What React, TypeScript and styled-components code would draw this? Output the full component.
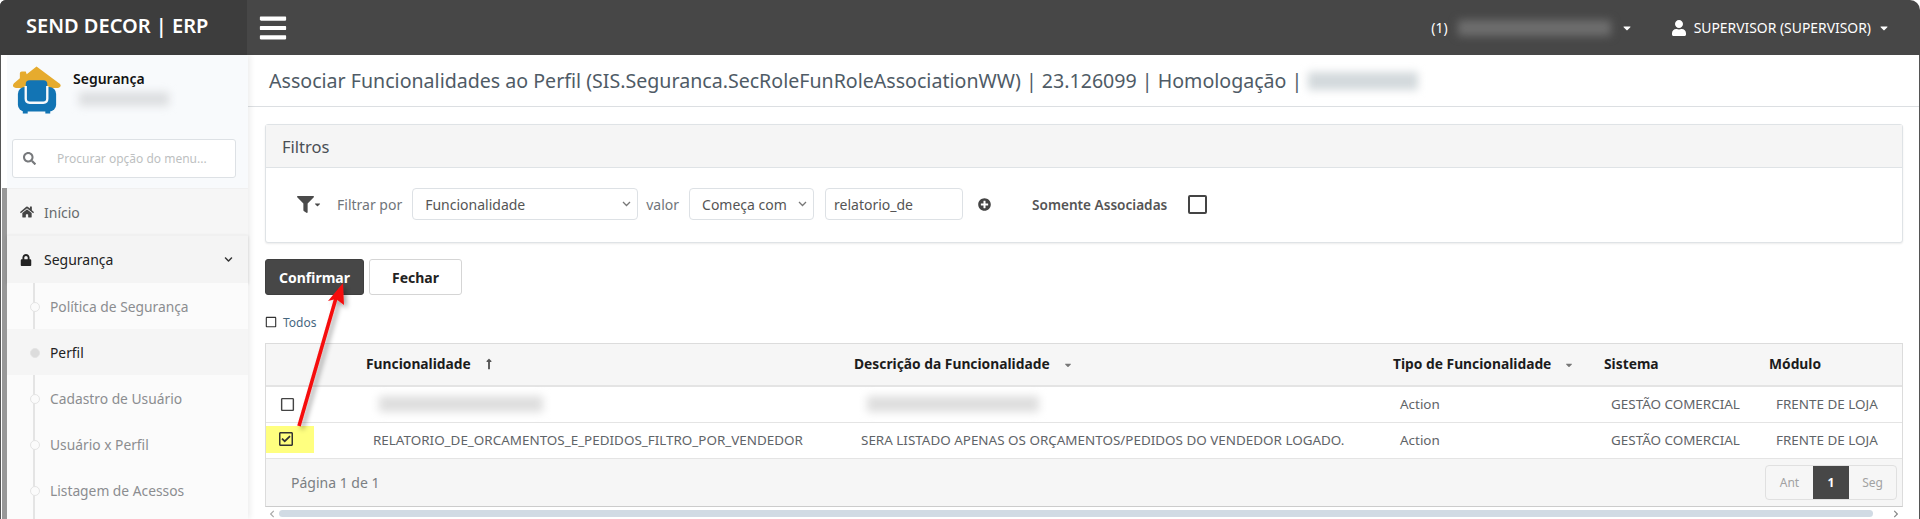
import styled, { createGlobalStyle } from 'styled-components';
import {
  FaBars,
  FaCaretDown,
  FaChevronDown,
  FaChevronLeft,
  FaChevronRight,
  FaFilter,
  FaHome,
  FaLock,
  FaLongArrowAltUp,
  FaPlusCircle,
  FaRegCheckSquare,
  FaRegSquare,
  FaSearch,
  FaUser,
} from 'react-icons/fa';

const subMenu = [
  'Política de Segurança',
  'Perfil',
  'Cadastro de Usuário',
  'Usuário x Perfil',
  'Listagem de Acessos',
];

const App: React.FC = () => {
  return (
    <Page>
      <GlobalStyle />
      <TopBar>
        <Brand>SEND DECOR | ERP</Brand>
        <MenuToggle>
          <FaBars />
        </MenuToggle>
        <TopRight>
          <TopItem>
            (1)
            <Blurred $width={153} $height={28} $color="#6e6e6e" />
            <FaCaretDown size={12} />
          </TopItem>
          <UserItem>
            <FaUser size={16} />
            SUPERVISOR (SUPERVISOR)
            <FaCaretDown size={12} />
          </UserItem>
        </TopRight>
      </TopBar>
      <Body>
        <Sidebar>
          <ScrollTrack>
            <ScrollThumb />
          </ScrollTrack>
          <SideContent>
            <Profile>
              <Logo viewBox="0 0 50 50">
                <path d="M24 1 L48 19 Q50 22 46 23 L3 23 Q-2 22 1 18 L7 13 V8 Q7 6 9 6 H13 L14 9 Z" fill="#e6ab2e" />
                <rect x="5" y="22" width="39" height="25" rx="7" fill="#1274b4" />
                <rect x="13" y="15" width="22" height="24" rx="4" fill="#1274b4" />
                <rect x="10" y="46" width="5" height="3" fill="#1274b4" />
                <rect x="33" y="46" width="5" height="3" fill="#1274b4" />
                <path d="M13 21 V34 Q13 38 17 38 H31 Q35 38 35 34 V21" fill="none" stroke="#f7f9fb" strokeWidth="2.4" />
              </Logo>
              <ProfileText>
                <ProfileName>Segurança</ProfileName>
                <Blurred $width={90} $height={26} $color="#dcdee0" />
              </ProfileText>
            </Profile>
            <SearchBox>
              <FaSearch size={13} color="#77797c" />
              <SearchInput placeholder="Procurar opção do menu..." />
            </SearchBox>
            <MenuRow>
              <MenuIcon>
                <FaHome size={14} color="#444" />
              </MenuIcon>
              Início
            </MenuRow>
            <MenuRow $open>
              <MenuIcon>
                <FaLock size={12} color="#222" />
              </MenuIcon>
              Segurança
              <MenuChevron>
                <FaChevronDown size={9} />
              </MenuChevron>
            </MenuRow>
            <SubMenu>
              {subMenu.map((item) => (
                <SubItem key={item} $active={item === 'Perfil'}>
                  {item}
                </SubItem>
              ))}
            </SubMenu>
          </SideContent>
        </Sidebar>
        <Main>
          <PageTitle>
            Associar Funcionalidades ao Perfil (SIS.Seguranca.SecRoleFunRoleAssociationWW) | 23.126099 | Homologação |
            <Blurred $width={110} $height={30} $color="#d3d9dc" />
          </PageTitle>
          <MainBody>
            <FilterCard>
              <FilterHeader>Filtros</FilterHeader>
              <FilterBody>
                <FilterIcon>
                  <FaFilter size={17} />
                  <FaCaretDown size={9} />
                </FilterIcon>
                <FilterLabel>Filtrar por</FilterLabel>
                <Select $width={226} defaultValue="Funcionalidade">
                  <option>Funcionalidade</option>
                </Select>
                <FilterLabel>valor</FilterLabel>
                <Select $width={125} defaultValue="Começa com">
                  <option>Começa com</option>
                </Select>
                <TextField defaultValue="relatorio_de" />
                <AddButton>
                  <FaPlusCircle size={13} />
                </AddButton>
                <OnlyLabel>Somente Associadas</OnlyLabel>
                <BigCheck />
              </FilterBody>
            </FilterCard>
            <Actions>
              <PrimaryButton>Confirmar</PrimaryButton>
              <DefaultButton>Fechar</DefaultButton>
            </Actions>
            <AllRow>
              <FaRegSquare size={12} color="#333" />
              <AllLink>Todos</AllLink>
            </AllRow>
            <TableBox>
              <Table>
                <colgroup>
                  <col width={95} />
                  <col width={488} />
                  <col width={539} />
                  <col width={211} />
                  <col width={165} />
                  <col width={138} />
                </colgroup>
                <thead>
                  <tr>
                    <Th />
                    <Th>
                      Funcionalidade
                      <SortUp>
                        <FaLongArrowAltUp size={12} />
                      </SortUp>
                    </Th>
                    <Th>
                      Descrição da Funcionalidade
                      <SortDown>
                        <FaCaretDown size={10} />
                      </SortDown>
                    </Th>
                    <Th>
                      Tipo de Funcionalidade
                      <SortDown>
                        <FaCaretDown size={10} />
                      </SortDown>
                    </Th>
                    <Th>Sistema</Th>
                    <Th>Módulo</Th>
                  </tr>
                </thead>
                <tbody>
                  <tr>
                    <CheckCell>
                      <FaRegSquare size={15} color="#444" />
                    </CheckCell>
                    <Td>
                      <Blurred $width={164} $height={28} $color="#dedede" />
                    </Td>
                    <Td>
                      <Blurred $width={172} $height={28} $color="#dedede" />
                    </Td>
                    <Td>Action</Td>
                    <Td>GESTÃO COMERCIAL</Td>
                    <Td>FRENTE DE LOJA</Td>
                  </tr>
                  <tr>
                    <CheckCell>
                      <Highlight />
                      <CheckedIcon>
                        <FaRegCheckSquare size={16} />
                      </CheckedIcon>
                    </CheckCell>
                    <Td>RELATORIO_DE_ORCAMENTOS_E_PEDIDOS_FILTRO_POR_VENDEDOR</Td>
                    <Td>SERA LISTADO APENAS OS ORÇAMENTOS/PEDIDOS DO VENDEDOR LOGADO.</Td>
                    <Td>Action</Td>
                    <Td>GESTÃO COMERCIAL</Td>
                    <Td>FRENTE DE LOJA</Td>
                  </tr>
                </tbody>
              </Table>
              <TableFooter>
                <PageInfo>Página 1 de 1</PageInfo>
                <Pager>
                  <PagerItem>Ant</PagerItem>
                  <PagerItem $current>1</PagerItem>
                  <PagerItem>Seg</PagerItem>
                </Pager>
              </TableFooter>
            </TableBox>
            <HScroll>
              <ScrollLeft>
                <FaChevronLeft size={8} />
              </ScrollLeft>
              <HThumb />
              <ScrollRight>
                <FaChevronRight size={8} />
              </ScrollRight>
            </HScroll>
          </MainBody>
        </Main>
      </Body>
      <ArrowOverlay viewBox="0 0 80 160">
        <defs>
          <filter id="arrowShadow" x="-40%" y="-20%" width="180%" height="140%">
            <feDropShadow dx="3" dy="3" stdDeviation="2.5" floodColor="#000" floodOpacity="0.35" />
          </filter>
        </defs>
        <g filter="url(#arrowShadow)" fill="#f50f0f">
          <line x1="14" y1="146" x2="51" y2="18" stroke="#f50f0f" strokeWidth="3.6" />
          <path d="M58 3 L59 25 L51 19 L43 21 Z" />
        </g>
      </ArrowOverlay>
    </Page>
  );
};

const GlobalStyle = createGlobalStyle`
  html, body {
    margin: 0;
    padding: 0;
    background: #fff;
  }
  * {
    box-sizing: border-box;
  }
  body {
    font-family: "Noto Sans", "Open Sans", sans-serif;
    font-size: 13.5px;
    color: #676a6c;
    overflow: hidden;
  }
`;
const Page = styled.div`
  position: relative;
  width: 1920px;
  height: 519px;
  overflow: hidden;
`;
const TopBar = styled.header`
  height: 55px;
  display: flex;
  align-items: center;
  background: #474747;
  color: #fff;
  border-radius: 6px 10px 0 0;
`;
const Brand = styled.div`
  width: 247px;
  height: 100%;
  flex-shrink: 0;
  padding: 0 0 5px 26px;
  display: flex;
  align-items: center;
  background: #3d3d3d;
  font-size: 20px;
  font-weight: 600;
  white-space: nowrap;
  border-top-left-radius: 6px;
`;
const MenuToggle = styled.div`
  margin-left: 11px;
  display: flex;
  font-size: 30px;
`;
const TopRight = styled.div`
  margin-left: auto;
  display: flex;
  align-items: center;
  padding-right: 30px;
`;
const TopItem = styled.div`
  display: flex;
  align-items: center;
  gap: 4px;
  font-size: 13.9px;
  margin-right: 38px;
`;
const UserItem = styled.div`
  display: flex;
  align-items: center;
  gap: 7px;
  font-size: 13.9px;
`;
const Blurred = styled.span<{ $width: number; $height: number; $color: string }>`
  display: inline-block;
  vertical-align: middle;
  width: ${({ $width }) => $width}px;
  height: ${({ $height }) => $height - 12}px;
  margin: 6px;
  background: ${({ $color }) => $color};
  filter: blur(4px);
`;
const Body = styled.div`
  display: flex;
  height: 464px;
`;
const Sidebar = styled.aside`
  width: 248px;
  flex-shrink: 0;
  display: flex;
  background: #f8fafc;
  box-shadow: 2px 0 6px rgba(0, 0, 0, 0.08);
  z-index: 1;
`;
const ScrollTrack = styled.div`
  width: 7px;
  padding: 133px 0 0 1px;
  flex-shrink: 0;
  background: #fff;
  border-left: 1px solid #555;
`;
const ScrollThumb = styled.div`
  width: 5px;
  height: 331px;
  background: #989898;
`;
const SideContent = styled.div`
  flex: 1;
  min-width: 0;
`;
const Profile = styled.div`
  height: 84px;
  padding: 10px 0 0 6px;
  display: flex;
  gap: 11px;
`;
const Logo = styled.svg`
  width: 49px;
  height: 50px;
  flex-shrink: 0;
`;
const ProfileText = styled.div`
  padding-top: 5px;
`;
const ProfileName = styled.div`
  font-size: 14px;
  font-weight: 600;
  color: #111;
  line-height: 18px;
  margin-bottom: -2px;
`;
const SearchBox = styled.div`
  width: 224px;
  height: 39px;
  margin-left: 5px;
  padding-left: 10px;
  display: flex;
  align-items: center;
  background: #fff;
  border: 1px solid #dde1e5;
  border-radius: 3px;
`;
const SearchInput = styled.input`
  flex: 1;
  min-width: 0;
  margin-left: 21px;
  padding: 0;
  border: 0;
  outline: 0;
  background: transparent;
  font-family: inherit;
  font-size: 12px;
  &::placeholder {
    color: #bdbfc1;
  }
`;
const MenuRow = styled.div<{ $open?: boolean }>`
  height: ${({ $open }) => ($open ? 48 : 47)}px;
  margin-top: ${({ $open }) => ($open ? 0 : 10)}px;
  padding-left: 13px;
  display: flex;
  align-items: center;
  font-size: 14px;
  color: ${({ $open }) => ($open ? '#222' : '#676a6c')};
  background: ${({ $open }) => ($open ? '#f4f4f4' : '#f6f6f6')};
  border-top: 1px solid #f0f0f0;
  box-shadow: ${({ $open }) => ($open ? '0 1px 3px rgba(0, 0, 0, 0.15)' : 'none')};
  position: relative;
`;
const MenuIcon = styled.span`
  display: flex;
  width: 24px;
`;
const MenuChevron = styled.span`
  display: flex;
  margin-left: auto;
  margin-right: 15px;
  color: #333;
`;
const SubMenu = styled.div`
  position: relative;
  background: #fbfbfb;
  height: 240px;
  &::before {
    content: '';
    position: absolute;
    left: 26px;
    top: 0;
    bottom: 0;
    width: 2px;
    background: #e4e4e4;
  }
`;
const SubItem = styled.div<{ $active?: boolean }>`
  position: relative;
  height: 46px;
  padding-left: 43px;
  display: flex;
  align-items: center;
  font-size: 13.8px;
  color: ${({ $active }) => ($active ? '#222' : '#8b8d90')};
  background: ${({ $active }) => ($active ? '#f5f5f5' : 'transparent')};
  &::before {
    content: '';
    position: absolute;
    left: 23px;
    top: 19px;
    width: 8px;
    height: 8px;
    border-radius: 50%;
    background: ${({ $active }) => ($active ? '#dcdcdc' : '#fbfbfb')};
    border: 1px solid #e4e4e4;
  }
`;
const Main = styled.main`
  flex: 1;
  min-width: 0;
  background: #fff;
  border-right: 1px solid #555;
`;
const PageTitle = styled.div`
  height: 52px;
  padding-left: 21px;
  display: flex;
  align-items: center;
  font-size: 19.6px;
  color: #4f5b66;
  white-space: nowrap;
  border-bottom: 1px solid #dcdfe2;
`;
const MainBody = styled.div`
  padding: 17px 16px 0 17px;
`;
const FilterCard = styled.section`
  height: 119px;
  background: #fff;
  border: 1px solid #dfe3e6;
  border-radius: 3px;
  box-shadow: 0 1px 2px rgba(0, 0, 0, 0.08);
`;
const FilterHeader = styled.div`
  height: 43px;
  padding-left: 16px;
  display: flex;
  align-items: center;
  font-size: 16.5px;
  color: #4a4f54;
  background: #f5f5f5;
  border-bottom: 1px solid #dfe3e6;
`;
const FilterBody = styled.div`
  padding: 0 0 2px 31px;
  display: flex;
  align-items: center;
  height: 74px;
  font-size: 14px;
`;
const FilterIcon = styled.span`
  display: flex;
  align-items: center;
  color: #4a4a4a;
  margin-right: 15px;
  & svg:last-child {
    margin-left: -1px;
  }
`;
const FilterLabel = styled.span`
  margin-right: 10px;
  white-space: nowrap;
  color: #70757a;
`;
const Select = styled.select<{ $width: number }>`
  appearance: none;
  width: ${({ $width }) => $width}px;
  height: 32px;
  margin-right: 8px;
  padding: 0 12px;
  background: #fff url("data:image/svg+xml,%3Csvg xmlns='http://www.w3.org/2000/svg' width='9' height='6'%3E%3Cpath d='M1 1l3.5 3.5L8 1' fill='none' stroke='%23777' stroke-width='1.3'/%3E%3C/svg%3E") no-repeat right 6px center;
  border: 1px solid #dde1e5;
  border-radius: 4px;
  font-family: inherit;
  font-size: 14px;
  color: #555;
`;
const TextField = styled.input`
  width: 138px;
  height: 32px;
  margin-left: 3px;
  padding: 0 8px;
  border: 1px solid #dde1e5;
  border-radius: 4px;
  outline: 0;
  font-family: inherit;
  font-size: 14px;
  color: #555;
`;
const AddButton = styled.span`
  display: flex;
  margin-left: 15px;
  color: #444;
`;
const OnlyLabel = styled.span`
  margin-left: 41px;
  font-size: 13.6px;
  font-weight: 600;
  color: #555;
  white-space: nowrap;
`;
const BigCheck = styled.span`
  width: 19px;
  height: 19px;
  margin-left: 21px;
  border: 2px solid #444;
  border-radius: 2px;
`;
const Actions = styled.div`
  display: flex;
  gap: 5px;
  margin-top: 16px;
`;
const PrimaryButton = styled.button`
  width: 99px;
  height: 36px;
  padding: 0;
  border: 1px solid #3f3f3f;
  border-radius: 3px;
  background: #474747;
  color: #fff;
  font-family: inherit;
  font-size: 14px;
  font-weight: 700;
`;
const DefaultButton = styled(PrimaryButton)`
  width: 93px;
  background: #fff;
  color: #222;
  border-color: #d5d5d5;
`;
const AllRow = styled.div`
  height: 14px;
  margin-top: 20px;
  display: flex;
  align-items: center;
  gap: 6px;
`;
const AllLink = styled.span`
  font-size: 12px;
  color: #47677f;
`;
const TableBox = styled.div`
  margin-top: 14px;
  border: 1px solid #dcdcdc;
  border-bottom-color: #ccc;
`;
const Table = styled.table`
  width: 100%;
  table-layout: fixed;
  border-collapse: collapse;
`;
const Th = styled.th`
  height: 42px;
  padding: 0 6px 2px 5px;
  text-align: left;
  font-size: 13.8px;
  font-weight: 700;
  color: #1c1c1c;
  white-space: nowrap;
  background: #f6f6f6;
  border-bottom: 2px solid #e4e4e4;
`;
const SortUp = styled.span`
  margin-left: 12px;
  color: #555;
  vertical-align: -1px;
`;
const SortDown = styled.span`
  margin-left: 13px;
  color: #777;
  vertical-align: -1px;
`;
const Td = styled.td`
  height: 36px;
  padding: 0 12px;
  font-size: 13.45px;
  color: #5f6468;
  white-space: nowrap;
  border-bottom: 1px solid #e4e4e4;
`;
const CheckCell = styled(Td)`
  position: relative;
  padding: 0 0 0 14px;
  line-height: 0;
`;
const Highlight = styled.span`
  position: absolute;
  left: 0;
  top: 3px;
  width: 48px;
  height: 27px;
  background: #ffff7f;
`;
const CheckedIcon = styled.span`
  position: relative;
  top: -1px;
  left: -2px;
  color: #333;
`;
const TableFooter = styled.div`
  height: 47px;
  padding: 0 5px 0 25px;
  display: flex;
  align-items: center;
  justify-content: space-between;
  background: #f6f6f6;
`;
const PageInfo = styled.span`
  font-size: 14px;
  color: #7b7f83;
`;
const Pager = styled.div`
  display: flex;
  height: 35px;
  border: 1px solid #e0e0e0;
  border-radius: 4px;
  overflow: hidden;
`;
const PagerItem = styled.span<{ $current?: boolean }>`
  width: ${({ $current }) => ($current ? 36 : 47)}px;
  display: flex;
  align-items: center;
  justify-content: center;
  font-size: 12px;
  font-weight: ${({ $current }) => ($current ? 700 : 400)};
  color: ${({ $current }) => ($current ? '#fff' : '#a2a2a2')};
  background: ${({ $current }) => ($current ? '#474747' : 'transparent')};
`;
const HScroll = styled.div`
  height: 8px;
  margin-top: 3px;
  display: flex;
  align-items: center;
`;
const HThumb = styled.div`
  flex: 1;
  height: 7px;
  border-radius: 4px;
  background: #d1dbe4;
`;
const ScrollLeft = styled.span`
  width: 14px;
  display: flex;
  justify-content: center;
  color: #aaa;
`;
const ScrollRight = styled.span`
  width: 30px;
  padding-right: 3px;
  display: flex;
  justify-content: flex-end;
  color: #888;
`;
const ArrowOverlay = styled.svg`
  position: absolute;
  left: 285px;
  top: 280px;
  width: 80px;
  height: 160px;
  z-index: 3;
  pointer-events: none;
`;

export default App;
